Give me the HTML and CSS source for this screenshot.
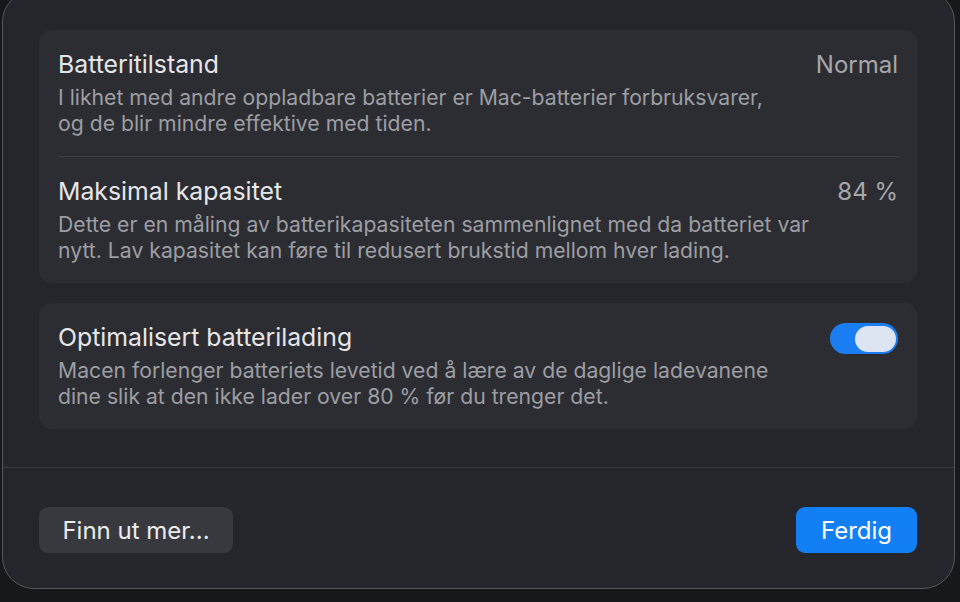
FILE: index.html
```html
<!DOCTYPE html>
<html lang="nb">
<head>
    <meta charset="UTF-8">
    <meta name="viewport" content="width=device-width, initial-scale=1.0">
    <title>Batteritilstand</title>
    <link rel="stylesheet" href="styles.css">
</head>
<body>
    <div class="sheet">
        <div class="sheet-content">
            <div class="card">
                <div class="row">
                    <div class="row-text">
                        <h3>Batteritilstand</h3>
                        <p>I likhet med andre oppladbare batterier er Mac-batterier forbruksvarer,<br>og de blir mindre effektive med tiden.</p>
                    </div>
                    <span class="row-value">Normal</span>
                </div>
                <div class="row">
                    <div class="row-text">
                        <h3>Maksimal kapasitet</h3>
                        <p>Dette er en måling av batterikapasiteten sammenlignet med da batteriet var<br>nytt. Lav kapasitet kan føre til redusert brukstid mellom hver lading.</p>
                    </div>
                    <span class="row-value">84 %</span>
                </div>
            </div>

            <div class="card">
                <div class="row">
                    <div class="row-text">
                        <h3>Optimalisert batterilading</h3>
                        <p>Macen forlenger batteriets levetid ved å lære av de daglige ladevanene<br>dine slik at den ikke lader over 80 % før du trenger det.</p>
                    </div>
                    <label class="switch">
                        <input type="checkbox" checked>
                        <span class="switch-track"><span class="switch-thumb"></span></span>
                    </label>
                </div>
            </div>
        </div>

        <div class="sheet-footer">
            <button type="button" class="btn btn-secondary">Finn ut mer...</button>
            <button type="button" class="btn btn-primary">Ferdig</button>
        </div>
    </div>
</body>
</html>
```

FILE: styles.css
```css
* {
    margin: 0;
    padding: 0;
    box-sizing: border-box;
    font-family: Inter, 'Noto Sans', 'Liberation Sans', sans-serif;
}

body {
    background-color: #17181b;
    width: 960px;
    height: 602px;
    overflow: hidden;
    padding: 0 5px 0 2px;
}

.sheet {
    margin-top: -10px;
    height: 599px;
    background-color: #24262b;
    border: 1px solid #55575c;
    border-radius: 32px;
    display: flex;
    flex-direction: column;
}

.sheet-content {
    padding: 39px 37px 38px 36px;
    display: flex;
    flex-direction: column;
    gap: 20px;
    border-bottom: 1px solid #3a3c41;
}

.card {
    background-color: #2c2d32;
    border-radius: 13px;
    padding: 0 19px;
}

.row {
    display: flex;
    justify-content: space-between;
    align-items: flex-start;
    padding: 20px 0;
}

.row + .row {
    border-top: 1px solid #3c3d42;
}

.row-text h3 {
    font-size: 24.8px;
    font-weight: 400;
    line-height: 29px;
    color: #e6e6e8;
    margin-bottom: 5px;
}

.row-text p {
    font-size: 21.2px;
    line-height: 26px;
    color: #9d9ea3;
}

.row-value {
    font-size: 24px;
    line-height: 29px;
    color: #a6a7ab;
}

.switch {
    display: block;
}

.switch input {
    display: none;
}

.switch-track {
    display: flex;
    align-items: center;
    justify-content: flex-end;
    width: 68px;
    height: 31px;
    padding: 0 2px;
    border-radius: 16px;
    background-color: #1a7df2;
}

.switch-thumb {
    width: 41px;
    height: 26px;
    border-radius: 13px;
    background-color: #dde5f3;
}

.sheet-footer {
    display: flex;
    justify-content: space-between;
    padding: 39px 37px 0 36px;
}

.btn {
    border: none;
    height: 46px;
    border-radius: 9px;
    font-size: 24px;
    color: #ececee;
    padding: 0 20px;
}

.btn-secondary {
    background-color: #38393e;
    width: 194px;
}

.btn-primary {
    background-color: #137ff4;
    color: #fff;
    width: 121px;
}
```
